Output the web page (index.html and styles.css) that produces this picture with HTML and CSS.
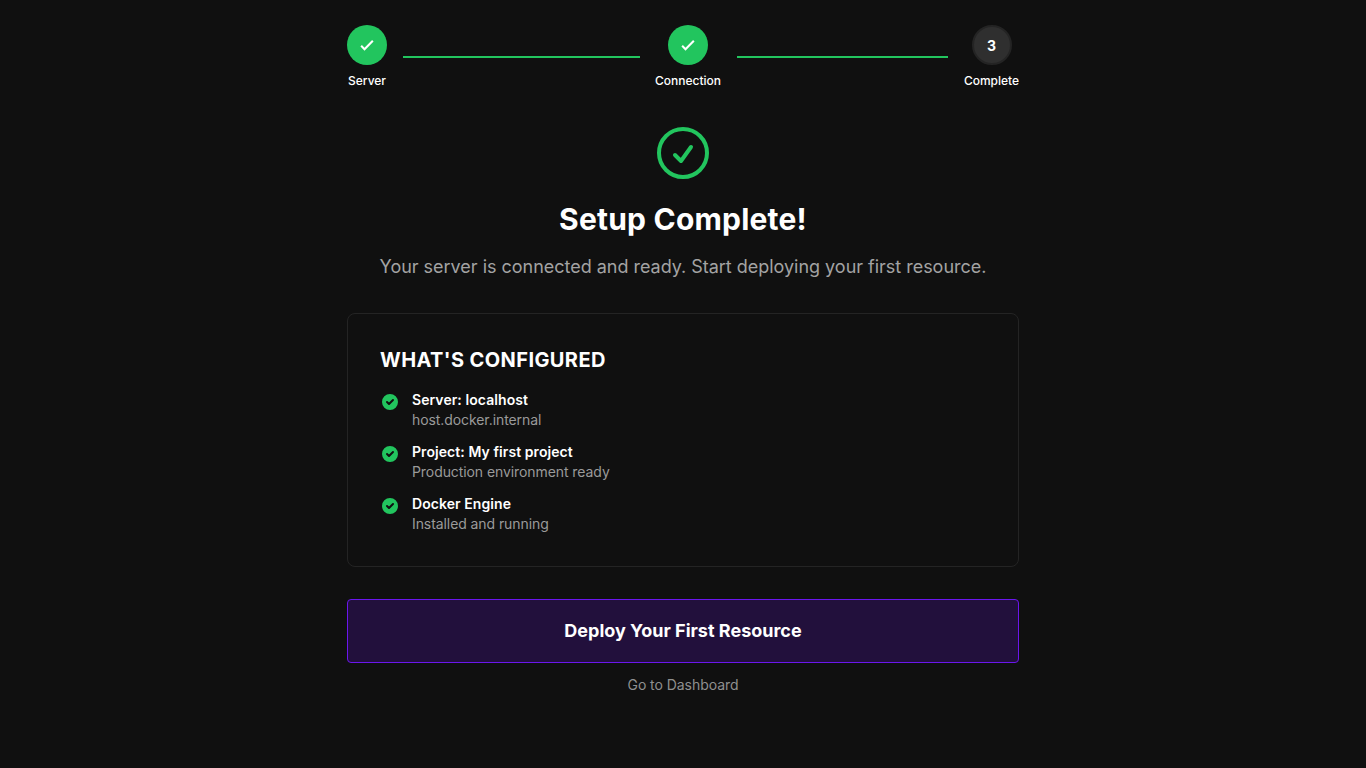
FILE: index.html
```html
<!DOCTYPE html>
<html lang="en">

<head>
  <meta charset="UTF-8">
  <meta name="viewport" content="width=device-width, initial-scale=1.0">
  <title>Setup Complete</title>
  <link rel="stylesheet" href="styles.css">
</head>

<body>
  <main class="container">
    <div class="stepper">
      <div class="step-group">
        <div class="step">
          <span class="step-circle done">
            <svg class="step-check" viewBox="0 0 24 24"><path d="M5 13l4 4L19 7" /></svg>
          </span>
          <span class="step-label">Server</span>
        </div>
        <div class="step-line"></div>
      </div>
      <div class="step-group">
        <div class="step step-wide">
          <span class="step-circle done">
            <svg class="step-check" viewBox="0 0 24 24"><path d="M5 13l4 4L19 7" /></svg>
          </span>
          <span class="step-label">Connection</span>
        </div>
        <div class="step-line"></div>
      </div>
      <div class="step step-last">
        <span class="step-circle current">3</span>
        <span class="step-label">Complete</span>
      </div>
    </div>

    <header class="intro">
      <svg class="intro-icon" viewBox="0 0 24 24">
        <path d="M9 12.75L11.25 15 15 9.75M21 12a9 9 0 11-18 0 9 9 0 0118 0z" />
      </svg>
      <h1>Setup Complete!</h1>
      <p>Your server is connected and ready. Start deploying your first resource.</p>
    </header>

    <section class="card">
      <h2>What's Configured</h2>
      <ul class="config-list">
        <li class="config-item">
          <svg class="config-icon" viewBox="0 0 20 20">
            <path fill-rule="evenodd" d="M10 18a8 8 0 100-16 8 8 0 000 16zm3.707-9.293a1 1 0 00-1.414-1.414L9 10.586 7.707 9.293a1 1 0 00-1.414 1.414l2 2a1 1 0 001.414 0l4-4z" />
          </svg>
          <div>
            <div class="config-title">Server: localhost</div>
            <div class="config-sub">host.docker.internal</div>
          </div>
        </li>
        <li class="config-item">
          <svg class="config-icon" viewBox="0 0 20 20">
            <path fill-rule="evenodd" d="M10 18a8 8 0 100-16 8 8 0 000 16zm3.707-9.293a1 1 0 00-1.414-1.414L9 10.586 7.707 9.293a1 1 0 00-1.414 1.414l2 2a1 1 0 001.414 0l4-4z" />
          </svg>
          <div>
            <div class="config-title">Project: My first project</div>
            <div class="config-sub">Production environment ready</div>
          </div>
        </li>
        <li class="config-item">
          <svg class="config-icon" viewBox="0 0 20 20">
            <path fill-rule="evenodd" d="M10 18a8 8 0 100-16 8 8 0 000 16zm3.707-9.293a1 1 0 00-1.414-1.414L9 10.586 7.707 9.293a1 1 0 00-1.414 1.414l2 2a1 1 0 001.414 0l4-4z" />
          </svg>
          <div>
            <div class="config-title">Docker Engine</div>
            <div class="config-sub">Installed and running</div>
          </div>
        </li>
      </ul>
    </section>

    <button type="button" class="deploy-btn">Deploy Your First Resource</button>
    <a href="#" class="dashboard-link">Go to Dashboard</a>
  </main>
</body>

</html>
```

FILE: styles.css
```css
* {
  box-sizing: border-box;
}

body {
  margin: 0;
  background-color: #101010;
  color: #fff;
  font-family: Inter, "Liberation Sans", sans-serif;
}

.container {
  width: 672px;
  margin: 0 auto;
  padding-top: 25px;
}

.stepper {
  display: flex;
  align-items: center;
  margin-bottom: 32px;
}

.step-group {
  flex: 1;
  display: flex;
  align-items: center;
}

.step {
  display: flex;
  flex-direction: column;
  align-items: center;
}

.step-wide {
  width: 65px;
}

.step-last {
  flex: none;
  width: 55px;
}

.step-circle {
  display: flex;
  align-items: center;
  justify-content: center;
  width: 40px;
  height: 40px;
  border-radius: 50%;
  font-size: 14px;
  font-weight: 700;
}

.step-circle.done {
  background-color: #22c55e;
}

.step-circle.current {
  background-color: #2f2f2f;
  border: 2px solid #242424;
}

.step-check {
  width: 20px;
  height: 20px;
  fill: none;
  stroke: #fff;
  stroke-width: 2.5;
}

.step-label {
  margin-top: 8px;
  font-size: 12px;
  line-height: 16px;
  font-weight: 500;
  white-space: nowrap;
}

.step-line {
  flex: 1;
  height: 2px;
  margin: 0 16px;
  background-color: #22c55e;
}

.intro {
  text-align: center;
  margin-bottom: 32px;
}

.intro-icon {
  display: block;
  width: 64px;
  height: 64px;
  margin: 0 auto 16px;
  fill: none;
  stroke: #22c55e;
  stroke-width: 1.5;
  stroke-linecap: round;
  stroke-linejoin: round;
}

.intro h1 {
  margin: 0 0 16px;
  font-size: 30px;
  line-height: 36px;
  font-weight: 700;
  letter-spacing: 0.2px;
}

.intro p {
  margin: 0;
  font-size: 18px;
  line-height: 28px;
  color: #a3a3a3;
  letter-spacing: -0.02px;
}

.card {
  border: 1px solid #242424;
  border-radius: 8px;
  padding: 32px;
  margin-bottom: 32px;
}

.card h2 {
  margin: 0 0 16px;
  font-size: 20px;
  line-height: 28px;
  font-weight: 700;
  text-transform: uppercase;
  letter-spacing: 0.4px;
}

.config-list {
  display: flex;
  flex-direction: column;
  gap: 12px;
  list-style: none;
  margin: 0;
  padding: 0;
}

.config-item {
  display: flex;
  gap: 12px;
}

.config-icon {
  flex-shrink: 0;
  width: 20px;
  height: 20px;
  margin-top: 2px;
  fill: #22c55e;
}

.config-title {
  font-size: 14px;
  line-height: 20px;
  font-weight: 600;
  letter-spacing: 0.07px;
}

.config-sub {
  font-size: 14px;
  line-height: 20px;
  color: #9a9a9a;
  letter-spacing: -0.08px;
}

.deploy-btn {
  display: block;
  width: 100%;
  height: 64px;
  margin-bottom: 12px;
  padding: 0 0 2px;
  background-color: #22103c;
  border: 1px solid #6b16ed;
  border-radius: 4px;
  color: #fff;
  font-family: inherit;
  font-size: 18px;
  font-weight: 700;
  cursor: pointer;
}

.dashboard-link {
  display: block;
  text-align: center;
  font-size: 14px;
  line-height: 20px;
  color: #8f8f8f;
  text-decoration: none;
  letter-spacing: -0.05px;
}
```
